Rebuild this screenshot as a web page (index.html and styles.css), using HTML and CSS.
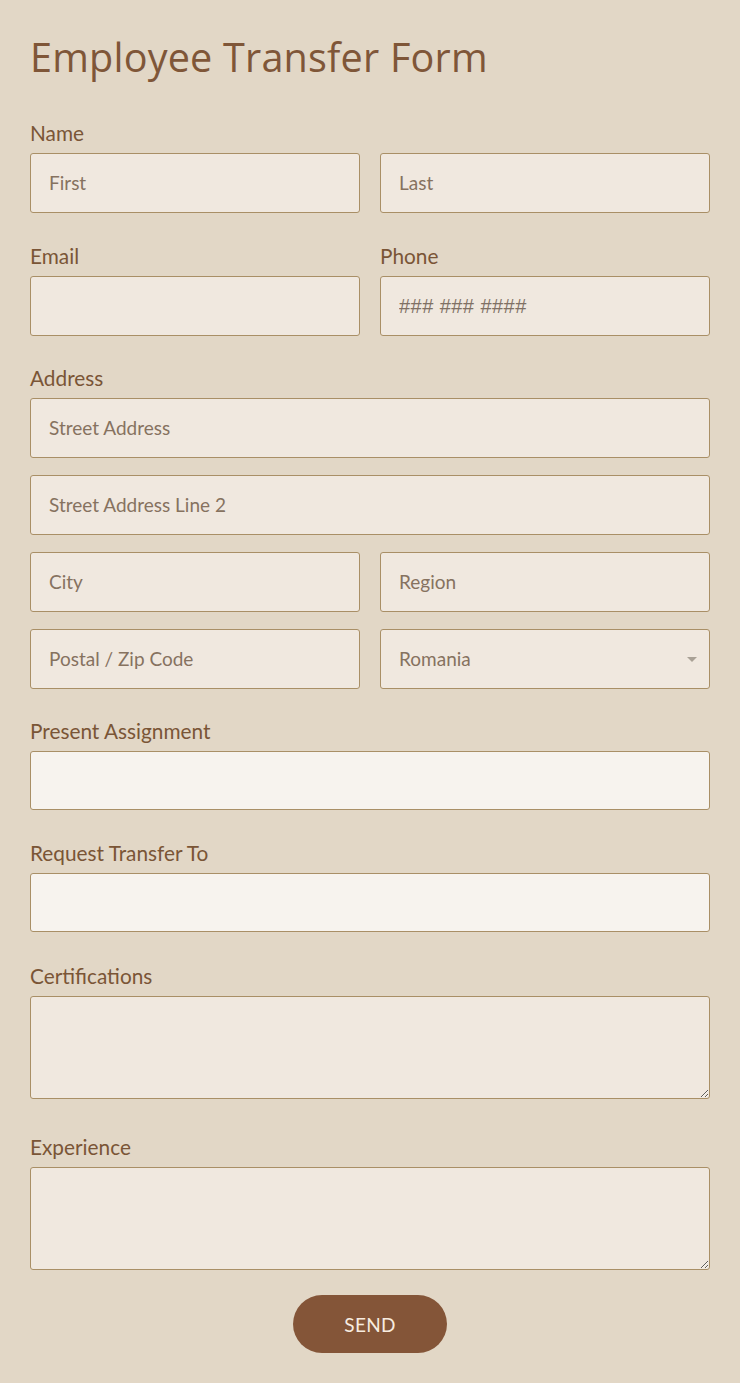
FILE: index.html
```html
<!DOCTYPE html>
<html lang="en">
<head>
<meta charset="utf-8">
<title>Employee Transfer Form</title>
<link rel="stylesheet" href="styles.css">
</head>
<body>
<form class="form">
  <h1 class="title">Employee Transfer Form</h1>

  <div class="field">
    <label class="label">Name</label>
    <div class="row">
      <input class="input" type="text" placeholder="First">
      <input class="input" type="text" placeholder="Last">
    </div>
  </div>

  <div class="row contact">
    <div class="field">
      <label class="label">Email</label>
      <input class="input" type="email">
    </div>
    <div class="field">
      <label class="label">Phone</label>
      <input class="input phone" type="tel" placeholder="### ### ####">
    </div>
  </div>

  <div class="field address">
    <label class="label">Address</label>
    <div class="stack">
      <input class="input" type="text" placeholder="Street Address">
      <input class="input" type="text" placeholder="Street Address Line 2">
      <div class="row">
        <input class="input" type="text" placeholder="City">
        <input class="input" type="text" placeholder="Region">
      </div>
      <div class="row">
        <input class="input" type="text" placeholder="Postal / Zip Code">
        <div class="select-wrap">
          <select class="input select">
            <option>Romania</option>
          </select>
          <span class="caret"></span>
        </div>
      </div>
    </div>
  </div>

  <div class="field">
    <label class="label">Present Assignment</label>
    <input class="input light" type="text">
  </div>

  <div class="field transfer">
    <label class="label">Request Transfer To</label>
    <input class="input light" type="text">
  </div>

  <div class="field field-area">
    <label class="label">Certifications</label>
    <textarea class="input area"></textarea>
  </div>

  <div class="field field-area last">
    <label class="label">Experience</label>
    <textarea class="input area"></textarea>
  </div>

  <div class="actions">
    <button class="send" type="button">SEND</button>
  </div>
</form>
</body>
</html>
```

FILE: styles.css
```css
* { box-sizing: border-box; }

html, body {
  margin: 0;
  padding: 0;
  background: #e2d7c6;
}

body {
  font-family: "Lato", "Open Sans", sans-serif;
  color: #7a5536;
}

.form {
  padding: 29px 30px 30px 30px;
  display: flex;
  flex-direction: column;
}

.title {
  font-family: "Open Sans", sans-serif;
  font-weight: 400;
  font-size: 39.6px;
  line-height: 56px;
  margin: 0 0 36px 0;
  color: #7f5638;
  letter-spacing: 0.2px;
}

.field {
  display: flex;
  flex-direction: column;
  margin-bottom: 31px;
  min-width: 0;
}

.row .field { margin-bottom: 0; }
.contact { margin-bottom: 30px; }
.address { margin-bottom: 30px; }
.transfer { margin-bottom: 32px; }

.field-area { margin-bottom: 36px; }
.field-area.last { margin-bottom: 25px; }

.label {
  font-size: 20.8px;
  line-height: 24px;
  height: 24px;
  margin-bottom: 8px;
  color: #7a5536;
}

.row {
  display: grid;
  grid-template-columns: 1fr 1fr;
  column-gap: 20px;
}

.stack {
  display: flex;
  flex-direction: column;
  gap: 17px;
}

.input {
  display: block;
  width: 100%;
  height: 60px;
  margin: 0;
  padding: 0 18px 2px 18px;
  border: 1px solid #a98f66;
  border-radius: 3px;
  background: #f0e8df;
  font-family: "Lato", sans-serif;
  font-size: 19px;
  color: #7a6655;
  outline: none;
}

.input::placeholder {
  color: #86725f;
  opacity: 1;
}

.phone::placeholder {
  font-family: "Liberation Sans", sans-serif;
  font-size: 20px;
  letter-spacing: 0.45px;
  color: #7f7064;
}

.light { background: #f7f3ee; height: 59px; }

.select-wrap { position: relative; }

.select {
  -webkit-appearance: none;
  appearance: none;
  color: #86725f;
}

.caret {
  position: absolute;
  right: 13px;
  top: 28px;
  width: 0;
  height: 0;
  border-left: 5px solid transparent;
  border-right: 5px solid transparent;
  border-top: 5px solid #a9a196;
}

.area {
  height: 103px;
  resize: vertical;
  padding: 12px 18px;
}

.actions {
  display: flex;
  justify-content: center;
}

.send {
  width: 154px;
  height: 58px;
  border: none;
  border-radius: 29px;
  background: #845538;
  color: #f7ece0;
  font-family: "Lato", sans-serif;
  font-size: 19px;
  letter-spacing: 0.3px;
  cursor: pointer;
}
```
